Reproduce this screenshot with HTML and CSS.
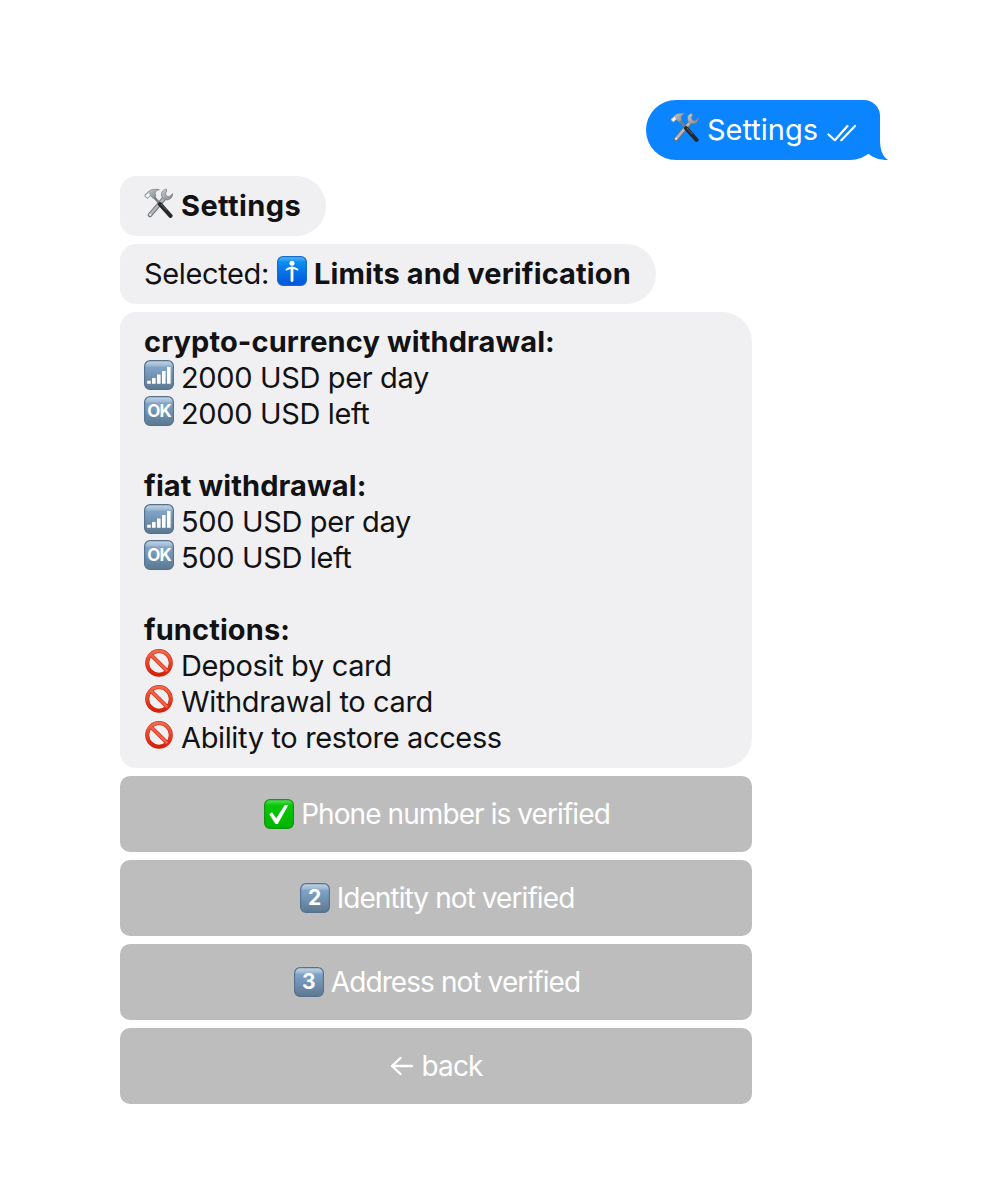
FILE: index.html
```html
<!DOCTYPE html>
<html lang="en">
<head>
    <meta charset="UTF-8">
    <meta name="viewport" content="width=device-width, initial-scale=1.0">
    <title>Settings - Limits and verification</title>
    <link rel="stylesheet" href="styles.css">
</head>
<body>
    <!-- Shared icons -->
    <svg class="sprite" aria-hidden="true">
        <defs>
            <linearGradient id="steel" x1="0" y1="0" x2="0" y2="1">
                <stop offset="0" stop-color="#c3d4e4"/>
                <stop offset="0.16" stop-color="#a3bcd5"/>
                <stop offset="0.24" stop-color="#7fa3c8"/>
                <stop offset="1" stop-color="#5c7890"/>
            </linearGradient>
            <linearGradient id="blue" x1="0" y1="0" x2="0" y2="1">
                <stop offset="0" stop-color="#62b8f4"/>
                <stop offset="0.2" stop-color="#0a8cf0"/>
                <stop offset="1" stop-color="#0053dc"/>
            </linearGradient>
            <linearGradient id="green" x1="0" y1="0" x2="0" y2="1">
                <stop offset="0" stop-color="#62dc62"/>
                <stop offset="0.2" stop-color="#08c808"/>
                <stop offset="1" stop-color="#00b400"/>
            </linearGradient>
            <linearGradient id="red" x1="0" y1="0" x2="0" y2="1">
                <stop offset="0" stop-color="#f4674c"/>
                <stop offset="1" stop-color="#dc1e08"/>
            </linearGradient>
            <linearGradient id="metal" x1="0" y1="0" x2="1" y2="1">
                <stop offset="0" stop-color="#c9ced3"/>
                <stop offset="1" stop-color="#7d8389"/>
            </linearGradient>
            <symbol id="tools" viewBox="0 0 30 30">
                <!-- wrench -->
                <path d="M20 10.5 6 27" stroke="#6c7075" stroke-width="4.4" stroke-linecap="round"/>
                <path d="M20 10.3 6 26.8" stroke="#b4b8bd" stroke-width="2.6" stroke-linecap="round"/>
                <path d="M22.6 1.2c-3.3.1-5.5 2.6-5.1 5.8.4 3.3 3.2 5.3 6.3 4.8 3-.5 4.9-2.9 4.8-6.2l-2.3 2.3c-1.2 1-2.9.9-3.9-.2s-1-2.7 0-3.9z" fill="url(#metal)" stroke="#74797e" stroke-width=".7"/>
                <circle cx="6.2" cy="26.8" r="1" fill="#eef0f2"/>
                <!-- hammer -->
                <path d="M9.5 8.5 16.5 16.5" stroke="#777d82" stroke-width="2.6"/>
                <path d="M16 16.2 26.5 27.8" stroke="#26282b" stroke-width="4.2" stroke-linecap="round"/>
                <path d="M16.5 15.8 22.5 22" stroke="#62666a" stroke-width="1"/>
                <path d="M.8 8.3 1.2 6.2 3 5.2C5.3 1.8 9 .5 15.4 1.7c-2.6.5-4.2 1.7-4.3 3.6l.8 2.7-2.6 2.3-2.6-2.3-1.6.4-1.5 2.1z" fill="url(#metal)" stroke="#7a7f84" stroke-width=".7"/>
                <path d="M1.2 7.8 4.5 4.8 6.2 6.9 3.5 9.7z" fill="#f2f5f8"/>
            </symbol>
            <symbol id="person" viewBox="0 0 30 30">
                <rect x=".6" y=".6" width="28.8" height="28.8" rx="5.5" fill="url(#blue)" stroke="#176ccb" stroke-width="1.2"/>
                <circle cx="15" cy="7.3" r="2.5" fill="#fff"/>
                <path d="M9.6 13.5Q15 10 20.4 13.5" fill="none" stroke="#fff" stroke-width="2" stroke-linecap="round"/>
                <path d="M15 12V24.5" stroke="#fff" stroke-width="2.8" stroke-linecap="round"/>
            </symbol>
            <symbol id="signal" viewBox="0 0 30 30">
                <rect x=".6" y=".6" width="28.8" height="28.8" rx="5.5" fill="url(#steel)" stroke="#55728f" stroke-width="1.2"/>
                <path d="M3.2 20.7h3.6v3h-3.6zM8 18h3.6v5.7h-3.6zM13 14.5h3.6v9.2h-3.6zM18 11h3.6v12.7h-3.6zM23 7h3.6v16.7h-3.6z" fill="#fff"/>
            </symbol>
            <symbol id="tile" viewBox="0 0 30 30">
                <rect x=".6" y=".6" width="28.8" height="28.8" rx="5.5" fill="url(#steel)" stroke="#55728f" stroke-width="1.2"/>
            </symbol>
            <symbol id="forbidden" viewBox="0 0 30 30">
                <circle cx="15" cy="14.9" r="11.8" fill="none" stroke="#c92810" stroke-width="4"/>
                <path d="M6.7 6.6 23.3 23.2" stroke="#c92810" stroke-width="4"/>
                <circle cx="15" cy="14.9" r="11.8" fill="none" stroke="url(#red)" stroke-width="3"/>
                <path d="M6.7 6.6 23.3 23.2" stroke="#ee6048" stroke-width="2.8"/>
            </symbol>
            <symbol id="check" viewBox="0 0 30 30">
                <rect x=".6" y=".6" width="28.8" height="28.8" rx="5.5" fill="url(#green)" stroke="#139413" stroke-width="1.2"/>
                <path d="M5.2 15.2 8 13.2 12.2 19.2 20.8 6h3.5L13.8 25h-2.2z" fill="#fff"/>
            </symbol>
        </defs>
    </svg>

    <main class="chat">
        <div class="bubble outgoing">
            <svg class="icon"><use href="#tools"/></svg>
            <span>Settings</span>
            <svg class="ticks" viewBox="0 0 30 18"><path d="M1.5 10.5 7.8 16.2 20.5 2M14.3 16.2 28 2" /></svg>
            <svg class="tail" viewBox="0 0 24 30"><path d="M16 0V9C16 19 18 26 24 30 16 30 9.5 28 4 23.5L0 10V0z"/></svg>
        </div>

        <div class="thread">
            <div class="bubble">
                <svg class="icon"><use href="#tools"/></svg>
                <strong>Settings</strong>
            </div>

            <div class="bubble selected">
                <span>Selected:</span>
                <svg class="icon"><use href="#person"/></svg>
                <strong>Limits and verification</strong>
            </div>

            <div class="bubble limits">
                <strong>crypto-currency withdrawal:</strong>
                <p class="line"><svg class="icon"><use href="#signal"/></svg><span>2000 USD per day</span></p>
                <p class="line"><span class="key ok"><svg class="icon"><use href="#tile"/></svg><b>OK</b></span><span>2000 USD left</span></p>
                <strong class="group">fiat withdrawal:</strong>
                <p class="line"><svg class="icon"><use href="#signal"/></svg><span>500 USD per day</span></p>
                <p class="line"><span class="key ok"><svg class="icon"><use href="#tile"/></svg><b>OK</b></span><span>500 USD left</span></p>
                <strong class="group">functions:</strong>
                <p class="line"><svg class="icon"><use href="#forbidden"/></svg><span>Deposit by card</span></p>
                <p class="line"><svg class="icon"><use href="#forbidden"/></svg><span>Withdrawal to card</span></p>
                <p class="line"><svg class="icon"><use href="#forbidden"/></svg><span>Ability to restore access</span></p>
            </div>

            <button class="action"><svg class="icon"><use href="#check"/></svg><span>Phone number is verified</span></button>
            <button class="action"><span class="key"><svg class="icon"><use href="#tile"/></svg><b>2</b></span><span>Identity not verified</span></button>
            <button class="action"><span class="key"><svg class="icon"><use href="#tile"/></svg><b>3</b></span><span>Address not verified</span></button>
            <button class="action back"><svg class="arrow" viewBox="0 0 24 20"><path d="M10.5 2 2 10l8.5 8M2 10h20"/></svg><span>back</span></button>
        </div>
    </main>
</body>
</html>
```
FILE: styles.css
```css
* {
    margin: 0;
    padding: 0;
    box-sizing: border-box;
}

body {
    background: #fff;
    color: #121214;
    font-family: Inter, "Liberation Sans", sans-serif;
    font-size: 29px;
    line-height: 36px;
    letter-spacing: -0.36px;
    white-space: nowrap;
}

.sprite {
    position: absolute;
    width: 0;
    height: 0;
}

.chat {
    display: flex;
    flex-direction: column;
    gap: 16px;
    padding: 100px 120px;
}

.thread {
    display: flex;
    flex-direction: column;
    align-items: flex-start;
    gap: 8px;
    width: 632px;
}

.bubble {
    display: flex;
    align-items: center;
    height: 60px;
    padding: 0 24px;
    background: #f0f0f2;
    border-radius: 16px 30px 30px 16px;
}

.bubble strong {
    font-weight: 700;
    letter-spacing: 0.11px;
}

.icon {
    display: block;
    flex: none;
    width: 30px;
    height: 30px;
    margin-right: 7px;
}

.bubble .icon {
    margin-bottom: 6px;
}

.thread > .bubble:first-child {
    width: 206px;
}

.thread > .bubble:first-child strong {
    letter-spacing: 0.4px;
}

.outgoing {
    position: relative;
    align-self: flex-end;
    width: 234px;
    background: #0a84ff;
    border-radius: 30px 16px 30px 30px;
    color: #fff;
    letter-spacing: 0;
}

.ticks {
    flex: none;
    width: 30px;
    height: 18px;
    margin: 6px 0 0 9px;
    fill: none;
    stroke: #fff;
    stroke-width: 2.2;
    stroke-linecap: round;
    stroke-linejoin: round;
}

.tail {
    position: absolute;
    right: -8px;
    bottom: 0;
    width: 24px;
    height: 30px;
    fill: #0a84ff;
}

.selected {
    width: 536px;
}

.selected .icon {
    margin: 0 7px 6px 8px;
}

.limits {
    flex-direction: column;
    align-items: flex-start;
    width: 100%;
    height: 456px;
    padding: 12px 24px;
}

.line {
    display: flex;
    align-items: center;
    height: 36px;
}

.group {
    margin-top: 36px;
}

.key {
    position: relative;
    display: block;
}

.key b {
    position: absolute;
    top: 0;
    left: 0;
    width: 30px;
    line-height: 30px;
    color: #fff;
    font-size: 21px;
    font-weight: 700;
    letter-spacing: 0;
    text-align: center;
}

.ok b {
    font-size: 17px;
    letter-spacing: -0.8px;
}

.action {
    display: flex;
    align-items: center;
    justify-content: center;
    width: 100%;
    height: 76px;
    padding-left: 2px;
    background: #bdbdbd;
    border: none;
    border-radius: 10px;
    color: #fff;
    font: inherit;
    font-size: 28px;
    letter-spacing: -0.92px;
    cursor: pointer;
}

.back {
    padding-left: 0;
}

.arrow {
    width: 24px;
    height: 20px;
    margin-right: 8px;
    fill: none;
    stroke: #fff;
    stroke-width: 2.4;
    stroke-linecap: round;
    stroke-linejoin: round;
}
```
